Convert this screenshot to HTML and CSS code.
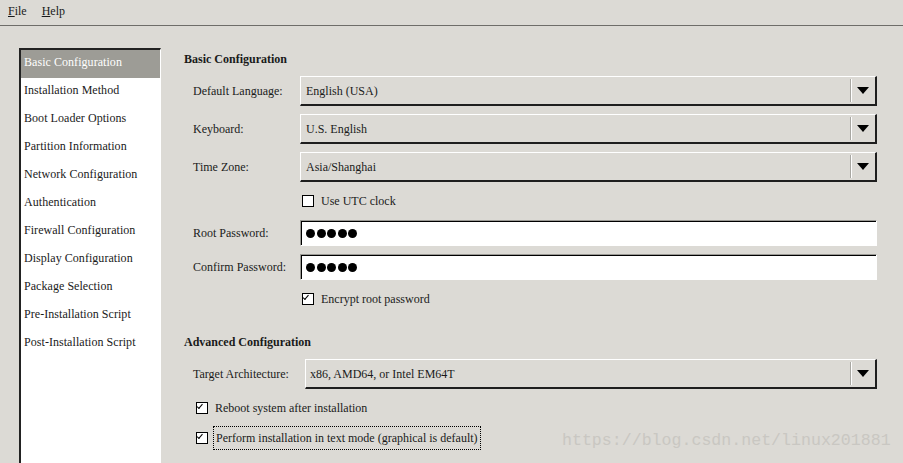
FILE: index.html
```html
<!DOCTYPE html>
<html>
<head>
<meta charset="utf-8">
<link rel="stylesheet" href="styles.css">
</head>
<body>
<div class="menubar">
  <span class="menu"><u>F</u>ile</span>
  <span class="menu"><u>H</u>elp</span>
</div>
<div class="main">
  <ul class="sidebar">
    <li class="selected">Basic Configuration</li>
    <li>Installation Method</li>
    <li>Boot Loader Options</li>
    <li>Partition Information</li>
    <li>Network Configuration</li>
    <li>Authentication</li>
    <li>Firewall Configuration</li>
    <li>Display Configuration</li>
    <li>Package Selection</li>
    <li>Pre-Installation Script</li>
    <li>Post-Installation Script</li>
  </ul>
  <div class="content">
    <div class="title">Basic Configuration</div>
    <div class="row combo-row first">
      <span class="label">Default Language:</span>
      <div class="combo"><span class="value">English (USA)</span><span class="sep"></span><span class="arrow"></span></div>
    </div>
    <div class="row combo-row">
      <span class="label">Keyboard:</span>
      <div class="combo"><span class="value">U.S. English</span><span class="sep"></span><span class="arrow"></span></div>
    </div>
    <div class="row combo-row">
      <span class="label">Time Zone:</span>
      <div class="combo"><span class="value">Asia/Shanghai</span><span class="sep"></span><span class="arrow"></span></div>
    </div>
    <div class="row check-row indent">
      <span class="box"></span><span class="check-text">Use UTC clock</span>
    </div>
    <div class="row entry-row first-entry">
      <span class="label">Root Password:</span>
      <div class="entry"><i></i><i></i><i></i><i></i><i></i></div>
    </div>
    <div class="row entry-row">
      <span class="label">Confirm Password:</span>
      <div class="entry"><i></i><i></i><i></i><i></i><i></i></div>
    </div>
    <div class="row check-row indent">
      <span class="box checked"></span><span class="check-text">Encrypt root password</span>
    </div>
    <div class="title adv">Advanced Configuration</div>
    <div class="row combo-row first">
      <span class="label wide">Target Architecture:</span>
      <div class="combo narrow-pad"><span class="value">x86, AMD64, or Intel EM64T</span><span class="sep"></span><span class="arrow"></span></div>
    </div>
    <div class="row check-row left first-check">
      <span class="box checked"></span><span class="check-text">Reboot system after installation</span>
    </div>
    <div class="row check-row left tight">
      <span class="box checked"></span><span class="check-text focus">Perform installation in text mode (graphical is default)</span>
    </div>
  </div>
</div>
<div class="watermark">https://blog.csdn.net/linux201881</div>
</body>
</html>
```
FILE: styles.css
```css
html, body {
  margin: 0;
  padding: 0;
  width: 903px;
  height: 463px;
  overflow: hidden;
  background: #dcdad5;
  font-family: "Liberation Serif", "DejaVu Serif", serif;
  font-size: 12px;
  color: #1a1a1a;
  position: relative;
}
.menubar {
  height: 25px;
  border-bottom: 1px solid #6e6d69;
  display: flex;
  align-items: center;
  padding-left: 8px;
  gap: 15px;
  box-sizing: content-box;
}
.menu {
  line-height: 20px;
  margin-top: -4px;
}
.main {
  display: flex;
  height: 437px;
  padding-top: 22px;
  box-sizing: border-box;
}
.sidebar {
  list-style: none;
  margin: 0 0 0 19px;
  padding: 0;
  width: 142px;
  box-sizing: border-box;
  background: #fff;
  border-left: 2px solid #222;
  border-top: 2px solid #222;
  border-right: 1px solid #fff;
  height: 430px;
}
.sidebar li {
  height: 28px;
  line-height: 24px;
  padding-left: 3px;
  white-space: nowrap;
  letter-spacing: 0.05px;
}
.sidebar li.selected {
  background: #9d9c96;
  color: #fff;
}
.content {
  flex: 1;
  padding: 1px 26px 0 23px;
}
.title {
  height: 20px;
  line-height: 20px;
  font-weight: bold;
}
.title.adv {
  margin-top: 18px;
}
.row {
  display: flex;
  align-items: center;
  margin-left: 9px;
}
.label {
  width: 107px;
  flex: none;
}
.label.wide {
  width: 112px;
}
.combo-row {
  height: 30px;
  margin-top: 8px;
}
.combo-row.first {
  margin-top: 7px;
}
.combo {
  flex: 1;
  height: 30px;
  box-sizing: border-box;
  border-top: 1px solid #fff;
  border-left: 1px solid #fff;
  border-right: 2px solid #1e1e1e;
  border-bottom: 2px solid #1e1e1e;
  display: flex;
  align-items: center;
  padding-left: 5px;
  padding-top: 1px;
}
.combo.narrow-pad {
  padding-left: 4px;
}
.combo .value {
  flex: 1;
}
.sep {
  width: 1px;
  height: 23px;
  background: #fff;
  box-shadow: -1px 0 0 #a8a7a2;
  margin-right: 5px;
  margin-top: -1px;
}
.arrow {
  width: 0;
  height: 0;
  border-left: 6.5px solid transparent;
  border-right: 6.5px solid transparent;
  border-top: 7px solid #000;
  margin-right: 6px;
  margin-top: -1px;
}
.check-row {
  height: 30px;
  margin-top: 4px;
}
.check-row.indent {
  padding-left: 109px;
}
.check-row.left {
  margin-left: 12px;
}
.check-row.tight {
  margin-top: 0;
}
.box {
  width: 12px;
  height: 12px;
  box-sizing: border-box;
  border: 1px solid #000;
  background: #fff;
  flex: none;
  position: relative;
}
.box.checked::after {
  content: "";
  position: absolute;
  left: 2px;
  top: 1px;
  width: 5px;
  height: 2px;
  border-left: 1px solid #000;
  border-bottom: 1px solid #000;
  transform: translate(0, 2px) rotate(-50deg);
  transform-origin: left bottom;
}
.check-text {
  margin-left: 7px;
}
.check-text.focus {
  margin-left: 5px;
  padding: 0 2px;
  line-height: 22px;
  border: 1px dotted #000;
}
.entry-row {
  height: 26px;
  margin-top: 8px;
}
.entry-row.first-entry {
  margin-top: 4px;
}
.entry {
  flex: 1;
  height: 26px;
  box-sizing: border-box;
  background: #fff;
  border-top: 1px solid #9a9994;
  border-left: 1px solid #9a9994;
  border-right: 1px solid #fff;
  border-bottom: 1px solid #fff;
  box-shadow: inset 1px 1px 0 #000;
  display: flex;
  align-items: center;
  padding-left: 5px;
  gap: 1.5px;
}
.entry i {
  width: 9px;
  height: 9px;
  border-radius: 50%;
  background: #000;
}
.watermark {
  position: absolute;
  left: 562px;
  top: 431px;
  font-family: "Liberation Mono", monospace;
  font-size: 16.6px;
  line-height: 20px;
  color: #c9c7c2;
  white-space: nowrap;
}
```
